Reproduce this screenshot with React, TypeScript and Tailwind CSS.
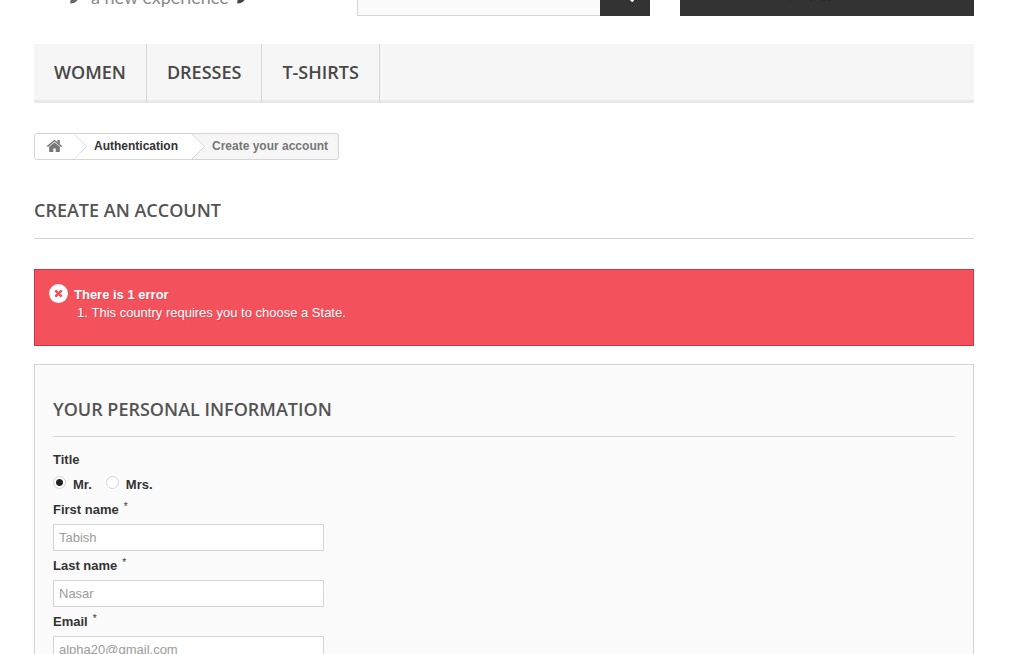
import React from "react";
import { FaSearch } from "react-icons/fa";

const menu = ["Women", "Dresses", "T-shirts"];

const fields = [
  { id: "firstname", label: "First name", type: "text", value: "Tabish" },
  { id: "lastname", label: "Last name", type: "text", value: "Nasar" },
  { id: "email", label: "Email", type: "email", value: "alpha20@gmail.com" },
];

function Brush({ className }: { className: string }) {
  return (
    <svg viewBox="0 0 10 14" className={`h-3.5 w-2.5 ${className}`} aria-hidden="true">
      <path d="M0.3 13.6 C-0.2 10 2 6 9.8 2 C10 9 6 13.6 0.3 13.6 Z" fill="currentColor" />
    </svg>
  );
}

function HomeIcon() {
  return (
    <svg viewBox="90 250 1612 1290" className="h-3 w-[15px]" aria-hidden="true">
      <path
        fill="currentColor"
        d="M1472 992v480q0 26-19 45t-45 19H1024v-384H768v384H384q-26 0-45-19t-19-45V992q0-1 .5-3t.5-3l575-474 575 474q1 2 1 6zm223-69l-62 74q-8 9-21 11h-3q-13 0-21-7L896 424 204 1001q-12 8-24 7-13-2-21-11l-62-74q-8-10-7-23.5t11-21.5l719-599q32-26 76-26t76 26l244 204V288q0-14 9-23t23-9h192q14 0 23 9t9 23v408l219 182q10 8 11 21.5t-7 23.5z"
      />
    </svg>
  );
}

function Chevron() {
  return (
    <svg viewBox="0 0 13 25" className="h-[25px] w-[13px]" aria-hidden="true">
      <path d="M0 0 L12.5 12.5 L0 25 Z" fill="#fff" />
      <path d="M0 0 L12.5 12.5 L0 25" fill="none" stroke="#d6d4d4" />
    </svg>
  );
}

function ErrorIcon() {
  return (
    <svg viewBox="0 0 19 19" className="-mt-0.5 size-[19px] shrink-0" aria-hidden="true">
      <circle cx="9.5" cy="9.5" r="9.4" fill="#fff" />
      <path d="M6.3 6.3 L12.7 12.7 M12.7 6.3 L6.3 12.7" stroke="#f3515c" strokeWidth="2.6" />
    </svg>
  );
}

function Header() {
  return (
    <header className="grid h-4 grid-cols-[293fr_293fr_294fr] content-end items-end gap-[30px] overflow-hidden">
      <a href="#" className="flex items-end pb-3 pl-9 text-[#686666]">
        <Brush className="mr-[11px]" />
        <span className="-mb-[5px] font-['Lato'] text-[18px] leading-6 whitespace-nowrap text-[#888]">
          a new experience
        </span>
        <Brush className="ml-2 text-[#444]" />
      </a>
      <form className="flex">
        <input
          type="search"
          aria-label="Search"
          className="h-[50px] min-w-0 flex-1 border border-r-0 border-[#d6d4d4] bg-[#fbfbfb] px-3"
        />
        <button
          type="button"
          aria-label="Search"
          className="flex h-[50px] w-[50px] items-center justify-center bg-[#333] pt-1 text-white"
        >
          <FaSearch className="size-[17px]" />
        </button>
      </form>
      <a
        href="#"
        className="flex h-[50px] items-end bg-[#333] pb-3.5 pl-[105px] text-[13px] font-bold text-[#333] [text-shadow:1px_1px_rgba(0,0,0,0.2)]"
      >
        (empty)
      </a>
    </header>
  );
}

export default function App() {
  return (
    <div className="h-screen overflow-hidden bg-white pr-[50px] pl-[34px] font-['Liberation_Sans',Arial,sans-serif] text-[13px] leading-[18px] text-[#777]">
      <Header />

      <nav className="mt-7 border-b-[3px] border-[#e9e9e9] bg-[#f6f6f6]">
        <ul className="flex">
          {menu.map((item) => (
            <li key={item} className="-mb-[3px] border-r border-[#d6d4d4]">
              <a
                href="#"
                className="block px-5 pt-[17px] pb-5 font-['Open_Sans'] text-[18px] leading-[22px] font-semibold text-[#484848] uppercase"
              >
                {item}
              </a>
            </li>
          ))}
        </ul>
      </nav>

      <main>
        <nav
          aria-label="Breadcrumb"
          className="mt-[30px] flex h-[27px] w-fit items-center overflow-hidden rounded-[3px] border border-[#d6d4d4] bg-[#f6f6f6] text-[12px] font-bold"
        >
          <a href="#" aria-label="Home" className="flex h-full items-center bg-white px-3 pb-0.5">
            <HomeIcon />
          </a>
          <Chevron />
          <a
            href="#"
            className="-ml-[13px] flex h-full items-center bg-white pr-3.5 pb-0.5 pl-5 text-[#333] [clip-path:polygon(0_0,100%_0,100%_100%,0_100%,13px_50%)]"
          >
            Authentication
          </a>
          <Chevron />
          <span className="pr-2.5 pb-0.5 pl-[7px]">Create your account</span>
        </nav>

        <h1 className="mt-[39px] border-b border-[#d6d4d4] pb-[17px] font-['Open_Sans'] text-[18px] leading-[22px] font-semibold text-[#555454] uppercase">
          Create an account
        </h1>

        <div
          role="alert"
          className="mt-[30px] flex gap-1.5 border border-[#d4323d] bg-[#f3515c] pt-4 pb-[23px] pl-3.5 text-white [text-shadow:1px_1px_rgba(0,0,0,0.1)]"
        >
          <ErrorIcon />
          <div>
            <p className="font-bold">There is 1 error</p>
            <ol className="list-inside list-decimal pl-[3px]">
              <li>This country requires you to choose a State.</li>
            </ol>
          </div>
        </div>

        <form className="mt-[18px] border border-[#d6d4d4] bg-[#fbfbfb] px-[18px] pt-[33px] pb-5">
          <h3 className="border-b border-[#d6d4d4] pb-4 font-['Open_Sans'] text-[18px] leading-[22px] font-semibold text-[#555454] uppercase">
            Your personal information
          </h3>
          <fieldset className="mt-3.5 font-bold text-[#333]">
            <legend>Title</legend>
            <div className="mt-[5px] mb-[7px] flex gap-3.5">
              {["Mr.", "Mrs."].map((title) => (
                <label key={title} className="flex gap-[7px]">
                  <input
                    type="radio"
                    name="title"
                    defaultChecked={title === "Mr."}
                    className="mt-0.5 size-[13px] appearance-none rounded-full border border-[#d6d4d4] bg-white checked:bg-[radial-gradient(circle,#222_3px,transparent_4px)]"
                  />
                  <span className="pt-0.5">{title}</span>
                </label>
              ))}
            </div>
          </fieldset>
          {fields.map((field) => (
            <div key={field.id} className="mb-1.5">
              <label htmlFor={field.id} className="flex gap-[5px] font-bold text-[#333]">
                {field.label}
                <span className="-mt-[3px] h-[18px] text-[10px] font-normal">*</span>
              </label>
              <input
                id={field.id}
                type={field.type}
                defaultValue={field.value}
                className="mt-[5px] block h-[27px] w-full max-w-[271px] border border-[#d6d4d4] bg-white px-[5px] text-[#9c9b9b]"
              />
            </div>
          ))}
        </form>
      </main>
    </div>
  );
}
